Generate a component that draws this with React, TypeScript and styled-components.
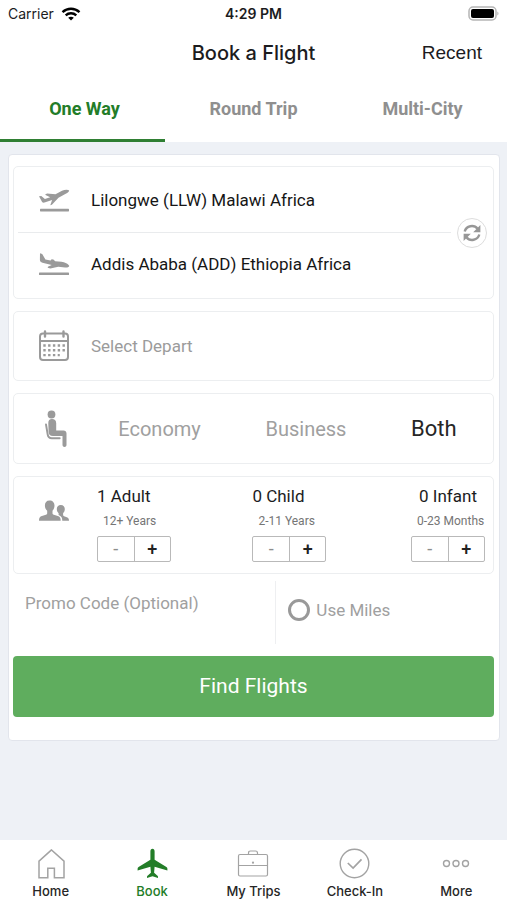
import React, { useState } from "react";
import styled, { createGlobalStyle } from "styled-components";

const GlobalStyle = createGlobalStyle`
  * { box-sizing: border-box; }
  body { margin: 0; background: #eef1f6; font-family: Roboto, sans-serif; color: #1c1c1e; }
  button, input { font: inherit; color: inherit; }
  button { margin: 0; padding: 0; border: 0; background: none; cursor: pointer; }
`;

const Screen = styled.div`
  display: flex;
  flex-direction: column;
  min-height: 100vh;
`;

const StatusBar = styled.div`
  display: grid;
  grid-template-columns: 1fr auto 1fr;
  align-items: center;
  height: 28px;
  padding: 0 8px;
  background: #fff;
  font: 500 14px/20px Inter, sans-serif;
`;

const Carrier = styled.span`
  display: flex;
  align-items: center;
  gap: 7px;
  font-weight: 400;
`;

const Clock = styled.time`
  font-weight: 600;
`;

const BatterySlot = styled.span`
  display: flex;
  justify-content: flex-end;
`;

const Header = styled.header`
  display: grid;
  grid-template-columns: 1fr auto 1fr;
  align-items: center;
  height: 49px;
  padding: 0 25px;
  background: #fff;
`;

const Title = styled.h1`
  grid-column: 2;
  margin: 0;
  font: 500 20px/28px Inter, sans-serif;
`;

const RecentButton = styled.button`
  justify-self: end;
  font: 400 19px/28px "Liberation Sans", sans-serif;
`;

const Tabs = styled.div`
  display: grid;
  grid-template-columns: repeat(3, 1fr);
  background: #fff;
`;

const Tab = styled.button<{ $active: boolean }>`
  display: flex;
  flex-direction: column;
  height: 65px;
  padding-top: 2px;
  font-size: 18px;
  line-height: 60px;
  font-weight: 700;
  text-align: center;
  color: ${(p) => (p.$active ? "#237d28" : "#8f8f8f")};

  &::after {
    content: "";
    height: 3px;
    margin-right: 4px;
    background: ${(p) => (p.$active ? "#2f7f33" : "transparent")};
  }
`;

const Main = styled.main`
  flex: 1;
  padding: 12px 7px 12px 8px;
`;

const Card = styled.form`
  padding: 11px 5px 23px 4px;
  border: 1px solid #e2e5ec;
  border-radius: 4px;
  background: #fff;
`;

const Panel = styled.section`
  position: relative;
  margin-bottom: 12px;
  border: 1px solid #eceef0;
  border-radius: 5px;
`;

const RoutePanel = styled(Panel)`
  padding-bottom: 3px;
`;

const Row = styled.div<{ $height: number }>`
  display: flex;
  align-items: center;
  gap: 16px;
  min-height: ${(p) => p.$height}px;
  padding-left: 24px;
`;

const IconBox = styled.span`
  display: flex;
  justify-content: center;
  flex: none;
  width: 32px;
  color: #9a9a9a;
`;

const FieldButton = styled.button<{ $empty?: boolean }>`
  flex: 1;
  padding: 12px 5px;
  font-size: 17px;
  line-height: 24px;
  text-align: left;
  color: ${(p) => (p.$empty ? "#9b9b9b" : "#161616")};
`;

const Divider = styled.hr`
  height: 1px;
  margin: 0 42px 0 4px;
  border: 0;
  background: #e9ebed;
`;

const SwapButton = styled.button`
  position: absolute;
  top: 50%;
  right: 6px;
  display: flex;
  align-items: center;
  justify-content: center;
  width: 30px;
  height: 30px;
  border: 1px solid #dddddd;
  border-radius: 50%;
  background: #fff;
  color: #979797;
  transform: translateY(-50%);
`;

const CabinOptions = styled.div`
  display: flex;
  flex: 1;
  justify-content: space-around;
  align-items: center;
  padding-right: 4px;
`;

const CabinButton = styled.button<{ $active: boolean }>`
  font-size: ${(p) => (p.$active ? 22 : 20)}px;
  line-height: 28px;
  color: ${(p) => (p.$active ? "#262626" : "#a0a0a0")};
`;

const PassengerRow = styled(Row)`
  align-items: flex-start;
  gap: 27px;
  padding: 8px 8px 11px 24px;

  ${IconBox} {
    margin-top: 14px;
  }
`;

const Counters = styled.div`
  display: grid;
  grid-template-columns: 49fr 50fr auto;
  flex: 1;
`;

const Counter = styled.div`
  width: 74px;
  white-space: nowrap;
`;

const CounterTitle = styled.div<{ $centered: boolean }>`
  font-size: 17px;
  line-height: 22px;
  text-align: ${(p) => (p.$centered ? "center" : "left")};
`;

const CounterNote = styled.div`
  margin: 6px 0 7px;
  padding-left: 6px;
  font-size: 12px;
  line-height: 16px;
  color: #757575;
`;

const Stepper = styled.div`
  display: flex;
  height: 26px;
  border: 1px solid #b9b9b9;
  border-radius: 2px;
`;

const StepButton = styled.button`
  flex: 1;
  font-size: 18px;
  line-height: 24px;
  font-weight: 500;
  color: #222;

  & + & {
    border-left: 1px solid #b9b9b9;
  }

  &:disabled {
    font-weight: 400;
    color: #8d8d8d;
  }
`;

const Extras = styled.div`
  display: grid;
  grid-template-columns: 6fr 5fr;
  margin: -5px 0 12px;
`;

const PromoInput = styled.input`
  width: 100%;
  height: 44px;
  padding: 0 12px;
  border: 0;
  outline: 0;
  background: none;
  font-size: 17px;

  &::placeholder {
    color: #a0a0a0;
    opacity: 1;
  }
`;

const MilesLabel = styled.label`
  display: flex;
  align-items: center;
  gap: 6px;
  height: 63px;
  padding: 0 0 6px 12px;
  border-left: 1px solid #eeeff1;
  font-size: 17px;
  color: #a0a0a0;
`;

const MilesCheck = styled.input`
  appearance: none;
  width: 22px;
  height: 22px;
  margin: 0;
  border: 3px solid #999;
  border-radius: 50%;

  &:checked {
    background: #5fad5e;
  }
`;

const SubmitButton = styled.button`
  width: 100%;
  height: 61px;
  padding-bottom: 2px;
  border-radius: 4px;
  background: #5fad5e;
  color: #fff;
  font-size: 21px;
`;

const BottomNav = styled.nav`
  display: grid;
  grid-template-columns: repeat(5, 1fr);
  padding: 8px 0 1px;
  background: #fff;
`;

const NavLink = styled.a<{ $active: boolean }>`
  display: flex;
  flex-direction: column;
  align-items: center;
  gap: 3px;
  font: 500 13px/16px Inter, sans-serif;
  text-decoration: none;
  color: ${(p) => (p.$active ? "#237d28" : "#262626")};

  svg {
    color: ${(p) => (p.$active ? "#237d28" : "#a3a3a3")};
  }
`;

const WifiIcon = () => (
  <svg width="20" height="14" viewBox="0 0 20 14" fill="none" stroke="#000" strokeWidth="2.4" aria-hidden="true">
    <path d="M1.500 5.200c5-4.600 12-4.600 17 0" />
    <path d="M4.700 8.400c3-2.800 7.600-2.800 10.600 0" />
    <path d="M10 13.600L7.200 10.800c1.600-1.400 4-1.400 5.600 0z" fill="#000" stroke="none" />
  </svg>
);

const Battery = () => (
  <svg width="32" height="16" viewBox="0 0 32 16" aria-hidden="true">
    <rect x="2" y="1" width="27" height="13" rx="4" fill="#fff" stroke="#b5b5b5" strokeWidth="1.500" />
    <rect x="4" y="3" width="23" height="9" rx="2" fill="#000" />
    <path d="M30.300 5.500c1.600.6 1.600 3.400 0 4z" fill="#b5b5b5" />
  </svg>
);

const TakeoffIcon = () => (
  <svg width="32" height="32" viewBox="0 0 32 32" fill="currentColor" aria-hidden="true">
    <path d="M1 12.300l2.300-.3 3.600 3 5.300-1.700L7 10.700 9 9.600l8.500.7 6.500-3.500c2.500-1.300 6-1.500 7.200-.4-.3 1.500-1.600 2.300-3 3l-7.700 4.300-6.600 7.100-1.600.4 1.800-5.300-7.600 2.700c-1 .3-1.800.2-2.400-.6z" />
    <rect x="2" y="24.800" width="29" height="2.600" rx="0.600" />
  </svg>
);

const LandingIcon = () => (
  <svg width="32" height="32" viewBox="0 0 32 32" fill="currentColor" aria-hidden="true">
    <path d="M2 5.300l2.200.6 3.200 5.600 5.200 1 1-1.300 1.800.3 1.800 1.700 6.200.5c3.200.4 7 2 7.900 4.300-.8 1.500-2.600 1.600-4.300 1.400l-6.700-.7-8 1.700-2.600-.6.200-1 3.800-1.800-9.200-2.300c-1.600-.5-2.500-1.300-2.600-2.700z" />
    <rect x="1" y="24.400" width="30" height="2.600" rx="0.600" />
  </svg>
);

const SwapIcon = () => (
  <svg width="18" height="18" viewBox="0 0 18 18" aria-hidden="true">
    <path id="swap-arc" d="M1.700 7.500A7.400 7.400 0 0 1 14.600 4.800" fill="none" stroke="currentColor" strokeWidth="2.400" />
    <path d="M17.400 1v7.200h-7.200z" fill="currentColor" />
    <path d="M16.300 10.500A7.400 7.400 0 0 1 3.400 13.200" fill="none" stroke="currentColor" strokeWidth="2.400" />
    <path d="M0.600 17V9.800h7.200z" fill="currentColor" />
  </svg>
);

const CalendarIcon = () => (
  <svg width="32" height="32" viewBox="0 0 32 32" fill="none" stroke="currentColor" strokeWidth="2" aria-hidden="true">
    <rect x="2" y="3.500" width="28" height="26.500" rx="3" />
    <path d="M2 11h28" />
    <path d="M7 1.500v5M25.500 1.500v5" strokeWidth="2.400" strokeLinecap="round" />
    <path d="M5.300 15.500h22M5.300 20.300h22M5.300 25.100h16.500" strokeWidth="2.400" strokeDasharray="2.400 2.400" />
  </svg>
);

const SeatIcon = () => (
  <svg width="32" height="38" viewBox="0 0 32 38" aria-hidden="true">
    <circle cx="13.500" cy="4.500" r="3.900" fill="currentColor" />
    <path
      d="M14 9c2.500 0 4.200 1.500 4.200 4v7.500h7.300c1.800 0 3 1.200 3 3V35c0 2.600-4 2.600-4 0v-9H15c-3 0-4.200-1.300-4.400-4l-.3-9c0-2.500 1.200-4 3.700-4z"
      fill="currentColor"
    />
    <path d="M8 14.500l1.700 10c.4 2.500 1.600 3.700 4 3.700h8" fill="none" stroke="currentColor" strokeWidth="1.900" strokeLinecap="round" />
  </svg>
);

const PeopleIcon = () => (
  <svg width="32" height="24" viewBox="0 0 32 24" fill="currentColor" aria-hidden="true">
    <path d="M11.500 1.500c3.200 0 5 2.100 5 5 0 2.200-.8 4-2 5.300v2.400c0 .8.5 1.200 1.300 1.500l4 1.400c2 .7 2.900 1.800 2.900 4.600H1c0-2.800.9-3.900 2.900-4.600l4-1.400c.8-.3 1.300-.7 1.300-1.500v-2.400c-1.500-1.300-2.300-3.100-2.300-5.300 0-2.900 1.600-5 4.600-5z" />
    <path d="M22.800 6c2.600 0 4 1.700 4 4 0 1.800-.6 3.200-1.700 4.200v1.900c0 .6.400.9 1 1.100l2.700 1c1.600.6 2.200 1.400 2.200 3.500h-6.700c0-2.700-.9-4.400-3.200-5.400l-.5-.3v-1.800c-1.100-1-1.800-2.400-1.800-4.200 0-2.300 1.400-4 4-4z" />
  </svg>
);

const HomeIcon = () => (
  <svg width="32" height="32" viewBox="0 0 32 32" fill="none" stroke="currentColor" strokeWidth="1.500" aria-hidden="true">
    <path d="M16.500 1.900L4 13.200v16.500h8.800v-9.400h6.600v9.400H29V13.200z" />
  </svg>
);

const PlaneIcon = () => (
  <svg width="32" height="32" viewBox="0 0 32 32" fill="currentColor" aria-hidden="true">
    <path d="M16.500 0.800c1.300 0 2.100 1.100 2.100 2.700v8.300l11.800 7.300c.7.500 1 1 1 1.700v1.700l-12.800-3.700-.5 6 3.400 2.900c.4.300.5.6.5 1v1.200l-5.500-1.600-5.500 1.600v-1.200c0-.4.100-.7.5-1l3.400-2.900-.5-6L1.600 22.500v-1.700c0-.7.300-1.200 1-1.700l11.800-7.300V3.500c0-1.600.8-2.700 2.100-2.700z" />
  </svg>
);

const BriefcaseIcon = () => (
  <svg width="32" height="32" viewBox="0 0 32 32" fill="none" stroke="currentColor" strokeWidth="1.200" aria-hidden="true">
    <rect x="1.500" y="6.500" width="29" height="21.500" rx="1.500" />
    <path d="M11.500 6.500V5c0-1.400.7-2 2-2h5c1.300 0 2 .6 2 2v1.500M1.500 17.500h29" />
    <circle cx="16" cy="14.700" r="1.100" fill="currentColor" stroke="none" />
  </svg>
);

const CheckIcon = () => (
  <svg width="32" height="32" viewBox="0 0 32 32" fill="none" stroke="currentColor" strokeWidth="1.400" aria-hidden="true">
    <circle cx="15.500" cy="15.500" r="14.300" />
    <path d="M8.800 15l5.300 5 8.400-8.600" strokeWidth="1.700" />
  </svg>
);

const MoreIcon = () => (
  <svg width="32" height="32" viewBox="0 0 32 32" fill="none" stroke="currentColor" strokeWidth="1.400" aria-hidden="true">
    <circle cx="6.500" cy="15.500" r="3" />
    <circle cx="16" cy="15.500" r="3" />
    <circle cx="25.500" cy="15.500" r="3" />
  </svg>
);

const tabs = ["One Way", "Round Trip", "Multi-City"];
const cabins = ["Economy", "Business", "Both"];
const passengerTypes = [
  { name: "Adult", note: "12+ Years", min: 1 },
  { name: "Child", note: "2-11 Years", min: 0 },
  { name: "Infant", note: "0-23 Months", min: 0 },
];
const navItems = [
  { label: "Home", icon: <HomeIcon /> },
  { label: "Book", icon: <PlaneIcon /> },
  { label: "My Trips", icon: <BriefcaseIcon /> },
  { label: "Check-In", icon: <CheckIcon /> },
  { label: "More", icon: <MoreIcon /> },
];

export default function App() {
  const [tab, setTab] = useState("One Way");
  const [cabin, setCabin] = useState("Both");
  const [counts, setCounts] = useState([1, 0, 0]);
  const [route, setRoute] = useState(["Lilongwe (LLW) Malawi Africa", "Addis Ababa (ADD) Ethiopia Africa"]);

  const step = (index: number, by: number) =>
    setCounts((all) => all.map((n, i) => (i === index ? n + by : n)));

  return (
    <Screen>
      <GlobalStyle />
      <StatusBar>
        <Carrier>
          Carrier <WifiIcon />
        </Carrier>
        <Clock>4:29 PM</Clock>
        <BatterySlot>
          <Battery />
        </BatterySlot>
      </StatusBar>
      <Header>
        <Title>Book a Flight</Title>
        <RecentButton type="button">Recent</RecentButton>
      </Header>
      <Tabs role="tablist">
        {tabs.map((name) => (
          <Tab key={name} type="button" role="tab" aria-selected={tab === name} $active={tab === name} onClick={() => setTab(name)}>
            {name}
          </Tab>
        ))}
      </Tabs>
      <Main>
        <Card onSubmit={(e) => e.preventDefault()}>
          <RoutePanel aria-label="Route">
            <Row $height={65}>
              <IconBox>
                <TakeoffIcon />
              </IconBox>
              <FieldButton type="button">{route[0]}</FieldButton>
            </Row>
            <Divider />
            <Row $height={62}>
              <IconBox>
                <LandingIcon />
              </IconBox>
              <FieldButton type="button">{route[1]}</FieldButton>
            </Row>
            <SwapButton type="button" aria-label="Swap airports" onClick={() => setRoute(([a, b]) => [b, a])}>
              <SwapIcon />
            </SwapButton>
          </RoutePanel>
          <Panel aria-label="Dates">
            <Row $height={68}>
              <IconBox>
                <CalendarIcon />
              </IconBox>
              <FieldButton type="button" $empty>
                Select Depart
              </FieldButton>
            </Row>
          </Panel>
          <Panel aria-label="Cabin">
            <Row $height={69}>
              <IconBox>
                <SeatIcon />
              </IconBox>
              <CabinOptions>
                {cabins.map((name) => (
                  <CabinButton key={name} type="button" aria-pressed={cabin === name} $active={cabin === name} onClick={() => setCabin(name)}>
                    {name}
                  </CabinButton>
                ))}
              </CabinOptions>
            </Row>
          </Panel>
          <Panel aria-label="Passengers">
            <PassengerRow $height={96}>
              <IconBox>
                <PeopleIcon />
              </IconBox>
              <Counters>
                {passengerTypes.map(({ name, note, min }, i) => (
                  <Counter key={name}>
                    <CounterTitle $centered={name === "Infant"}>
                      {counts[i]} {name}
                    </CounterTitle>
                    <CounterNote>{note}</CounterNote>
                    <Stepper>
                      <StepButton type="button" aria-label={`Remove ${name}`} disabled={counts[i] <= min} onClick={() => step(i, -1)}>
                        -
                      </StepButton>
                      <StepButton type="button" aria-label={`Add ${name}`} onClick={() => step(i, 1)}>
                        +
                      </StepButton>
                    </Stepper>
                  </Counter>
                ))}
              </Counters>
            </PassengerRow>
          </Panel>
          <Extras>
            <PromoInput type="text" aria-label="Promo code" placeholder="Promo Code (Optional)" />
            <MilesLabel>
              <MilesCheck type="checkbox" />
              Use Miles
            </MilesLabel>
          </Extras>
          <SubmitButton type="submit">Find Flights</SubmitButton>
        </Card>
      </Main>
      <BottomNav aria-label="Main">
        {navItems.map(({ label, icon }) => (
          <NavLink key={label} href="#" $active={label === "Book"}>
            {icon}
            {label}
          </NavLink>
        ))}
      </BottomNav>
    </Screen>
  );
}
